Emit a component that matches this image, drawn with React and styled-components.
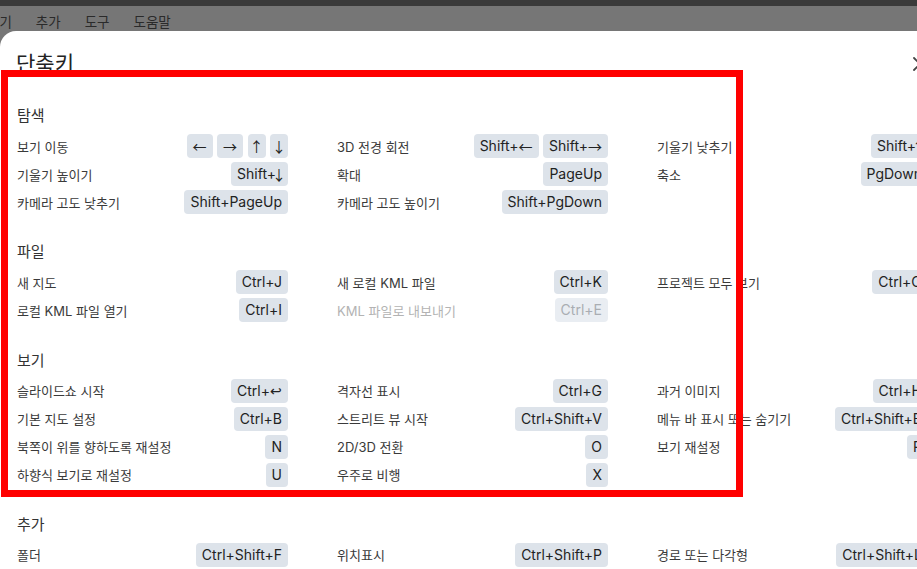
import React from "react";
import styled, { createGlobalStyle } from "styled-components";

const GlobalStyle = createGlobalStyle`
  html, body {
    margin: 0;
    padding: 0;
    overflow: hidden;
    background-color: #767676;
  }

  body {
    font-family: Inter, "Noto Sans CJK KR", sans-serif;
  }
`;

const SECTIONS = [
  {
    title: "탐색",
    items: [
      { label: "보기 이동", keys: ["←", "→", "↑", "↓"] },
      { label: "3D 전경 회전", keys: ["Shift+←", "Shift+→"] },
      { label: "기울기 낮추기", keys: ["Shift+↑"] },
      { label: "기울기 높이기", keys: ["Shift+↓"] },
      { label: "확대", keys: ["PageUp"] },
      { label: "축소", keys: ["PgDown"] },
      { label: "카메라 고도 낮추기", keys: ["Shift+PageUp"] },
      { label: "카메라 고도 높이기", keys: ["Shift+PgDown"] }
    ]
  },
  {
    title: "파일",
    items: [
      { label: "새 지도", keys: ["Ctrl+J"] },
      { label: "새 로컬 KML 파일", keys: ["Ctrl+K"] },
      { label: "프로젝트 모두 보기", keys: ["Ctrl+O"] },
      { label: "로컬 KML 파일 열기", keys: ["Ctrl+I"] },
      { label: "KML 파일로 내보내기", keys: ["Ctrl+E"], disabled: true }
    ]
  },
  {
    title: "보기",
    items: [
      { label: "슬라이드쇼 시작", keys: ["Ctrl+↩"] },
      { label: "격자선 표시", keys: ["Ctrl+G"] },
      { label: "과거 이미지", keys: ["Ctrl+H"] },
      { label: "기본 지도 설정", keys: ["Ctrl+B"] },
      { label: "스트리트 뷰 시작", keys: ["Ctrl+Shift+V"] },
      { label: "메뉴 바 표시 또는 숨기기", keys: ["Ctrl+Shift+B"] },
      { label: "북쪽이 위를 향하도록 재설정", keys: ["N"] },
      { label: "2D/3D 전환", keys: ["O"] },
      { label: "보기 재설정", keys: ["R"] },
      { label: "하향식 보기로 재설정", keys: ["U"] },
      { label: "우주로 비행", keys: ["X"] }
    ]
  },
  {
    title: "추가",
    items: [
      { label: "폴더", keys: ["Ctrl+Shift+F"] },
      { label: "위치표시", keys: ["Ctrl+Shift+P"] },
      { label: "경로 또는 다각형", keys: ["Ctrl+Shift+L"] }
    ]
  }
];

const MENU = ["보기", "추가", "도구", "도움말"];

// arrows use thinner fallback glyphs than Inter's
const GLYPHS = {
  "←": "wide",
  "→": "wide",
  "↑": "narrow",
  "↓": "narrow",
  "↩": "hook"
};

function KeyText({ text }) {
  return text.split("").map((ch, i) =>
    GLYPHS[ch] ? (
      <StGlyph key={i} $kind={GLYPHS[ch]}>
        {ch}
      </StGlyph>
    ) : (
      ch
    )
  );
}

function App() {
  return (
    <>
      <GlobalStyle />
      <StPage>
        <StAppBar>
          <StMenu>
            {MENU.map((m) => (
              <StMenuItem key={m}>{m}</StMenuItem>
            ))}
          </StMenu>
        </StAppBar>

        <StDialog>
          <StHeader>
            <StTitle>단축키</StTitle>
            <StClose aria-label="닫기">
              <svg width="14" height="14" viewBox="0 0 14 14">
                <path
                  d="M1 1 L13 13 M13 1 L1 13"
                  stroke="#444"
                  strokeWidth="1.8"
                  strokeLinecap="round"
                />
              </svg>
            </StClose>
          </StHeader>

          <StBody>
            {SECTIONS.map((section) => (
              <StSection key={section.title}>
                <StSectionTitle>{section.title}</StSectionTitle>
                <StGrid>
                  {section.items.map((item) => (
                    <StRow key={item.label}>
                      <StLabel $disabled={item.disabled}>{item.label}</StLabel>
                      <StKeys>
                        {item.keys.map((k) => (
                          <StKey key={k} $disabled={item.disabled}>
                            <KeyText text={k} />
                          </StKey>
                        ))}
                      </StKeys>
                    </StRow>
                  ))}
                </StGrid>
              </StSection>
            ))}
          </StBody>
        </StDialog>

        <StHighlight />
      </StPage>
    </>
  );
}

export default App;

const StPage = styled.div`
  position: relative;
  width: 917px;
  height: 569px;
  overflow: hidden;
`;

const StAppBar = styled.div`
  height: 25px;
  border-top: 6px solid #3a3a3a;
  background-color: #767676;
`;

const StMenu = styled.div`
  display: flex;
  align-items: center;
  height: 100%;
  margin-left: -13px;
  gap: 24px;
`;

const StMenuItem = styled.span`
  font-size: 13.5px;
  line-height: 18px;
  color: #2a2a2a;
  padding-top: 7px;
`;

const StDialog = styled.div`
  width: 960px;
  height: 560px;

  background-color: white;
  border-radius: 16px 16px 0 0;
`;

const StHeader = styled.div`
  display: flex;
  align-items: center;
  justify-content: space-between;

  padding: 18px 33px 0 16px;
`;

const StTitle = styled.h2`
  margin: 0;
  font-size: 21px;
  line-height: 29px;
  font-weight: 400;
  color: #222;
`;

const StClose = styled.div`
  display: flex;
  align-items: center;
  justify-content: center;
  width: 14px;
  height: 14px;
`;

const StBody = styled.div`
  display: flex;
  flex-direction: column;
  gap: 28.3px;

  padding: 28px 0 0 17px;
`;

const StSection = styled.section`
  display: flex;
  flex-direction: column;
  gap: 8px;
`;

const StSectionTitle = styled.h3`
  margin: 0;
  font-size: 15px;
  line-height: 20px;
  font-weight: 400;
  color: #333;
`;

const StGrid = styled.div`
  display: grid;
  grid-template-columns: repeat(3, 271px);
  column-gap: 49px;
  row-gap: 4px;
`;

const StRow = styled.div`
  display: flex;
  align-items: center;
  justify-content: space-between;
  height: 24px;
`;

const StLabel = styled.span`
  font-size: 13px;
  color: ${({ $disabled }) => ($disabled ? "#b3b3b3" : "#3a3a3a")};
  white-space: nowrap;
`;

const StKeys = styled.div`
  display: flex;
  gap: 4.5px;
`;

const StKey = styled.span`
  display: inline-flex;
  align-items: center;
  height: 24px;
  padding: 0 6px;

  font-size: 14px;
  line-height: 24px;
  color: ${({ $disabled }) => ($disabled ? "#a9adb3" : "#222")};
  white-space: nowrap;

  background-color: ${({ $disabled }) => ($disabled ? "#e9edf2" : "#dde3ea")};
  border-radius: 4px;
`;

const StGlyph = styled.span`
  font-family: ${({ $kind }) =>
    $kind === "hook" ? '"Liberation Sans", sans-serif' : '"Noto Sans CJK KR", sans-serif'};
  margin: ${({ $kind }) => ($kind === "narrow" ? "0 -4px" : "0")};
  line-height: 24px;
`;

const StHighlight = styled.div`
  position: absolute;
  left: 1px;
  top: 70px;
  width: 742px;
  height: 427px;
  box-sizing: border-box;

  border: 7px solid #ff0000;
  pointer-events: none;
`;
